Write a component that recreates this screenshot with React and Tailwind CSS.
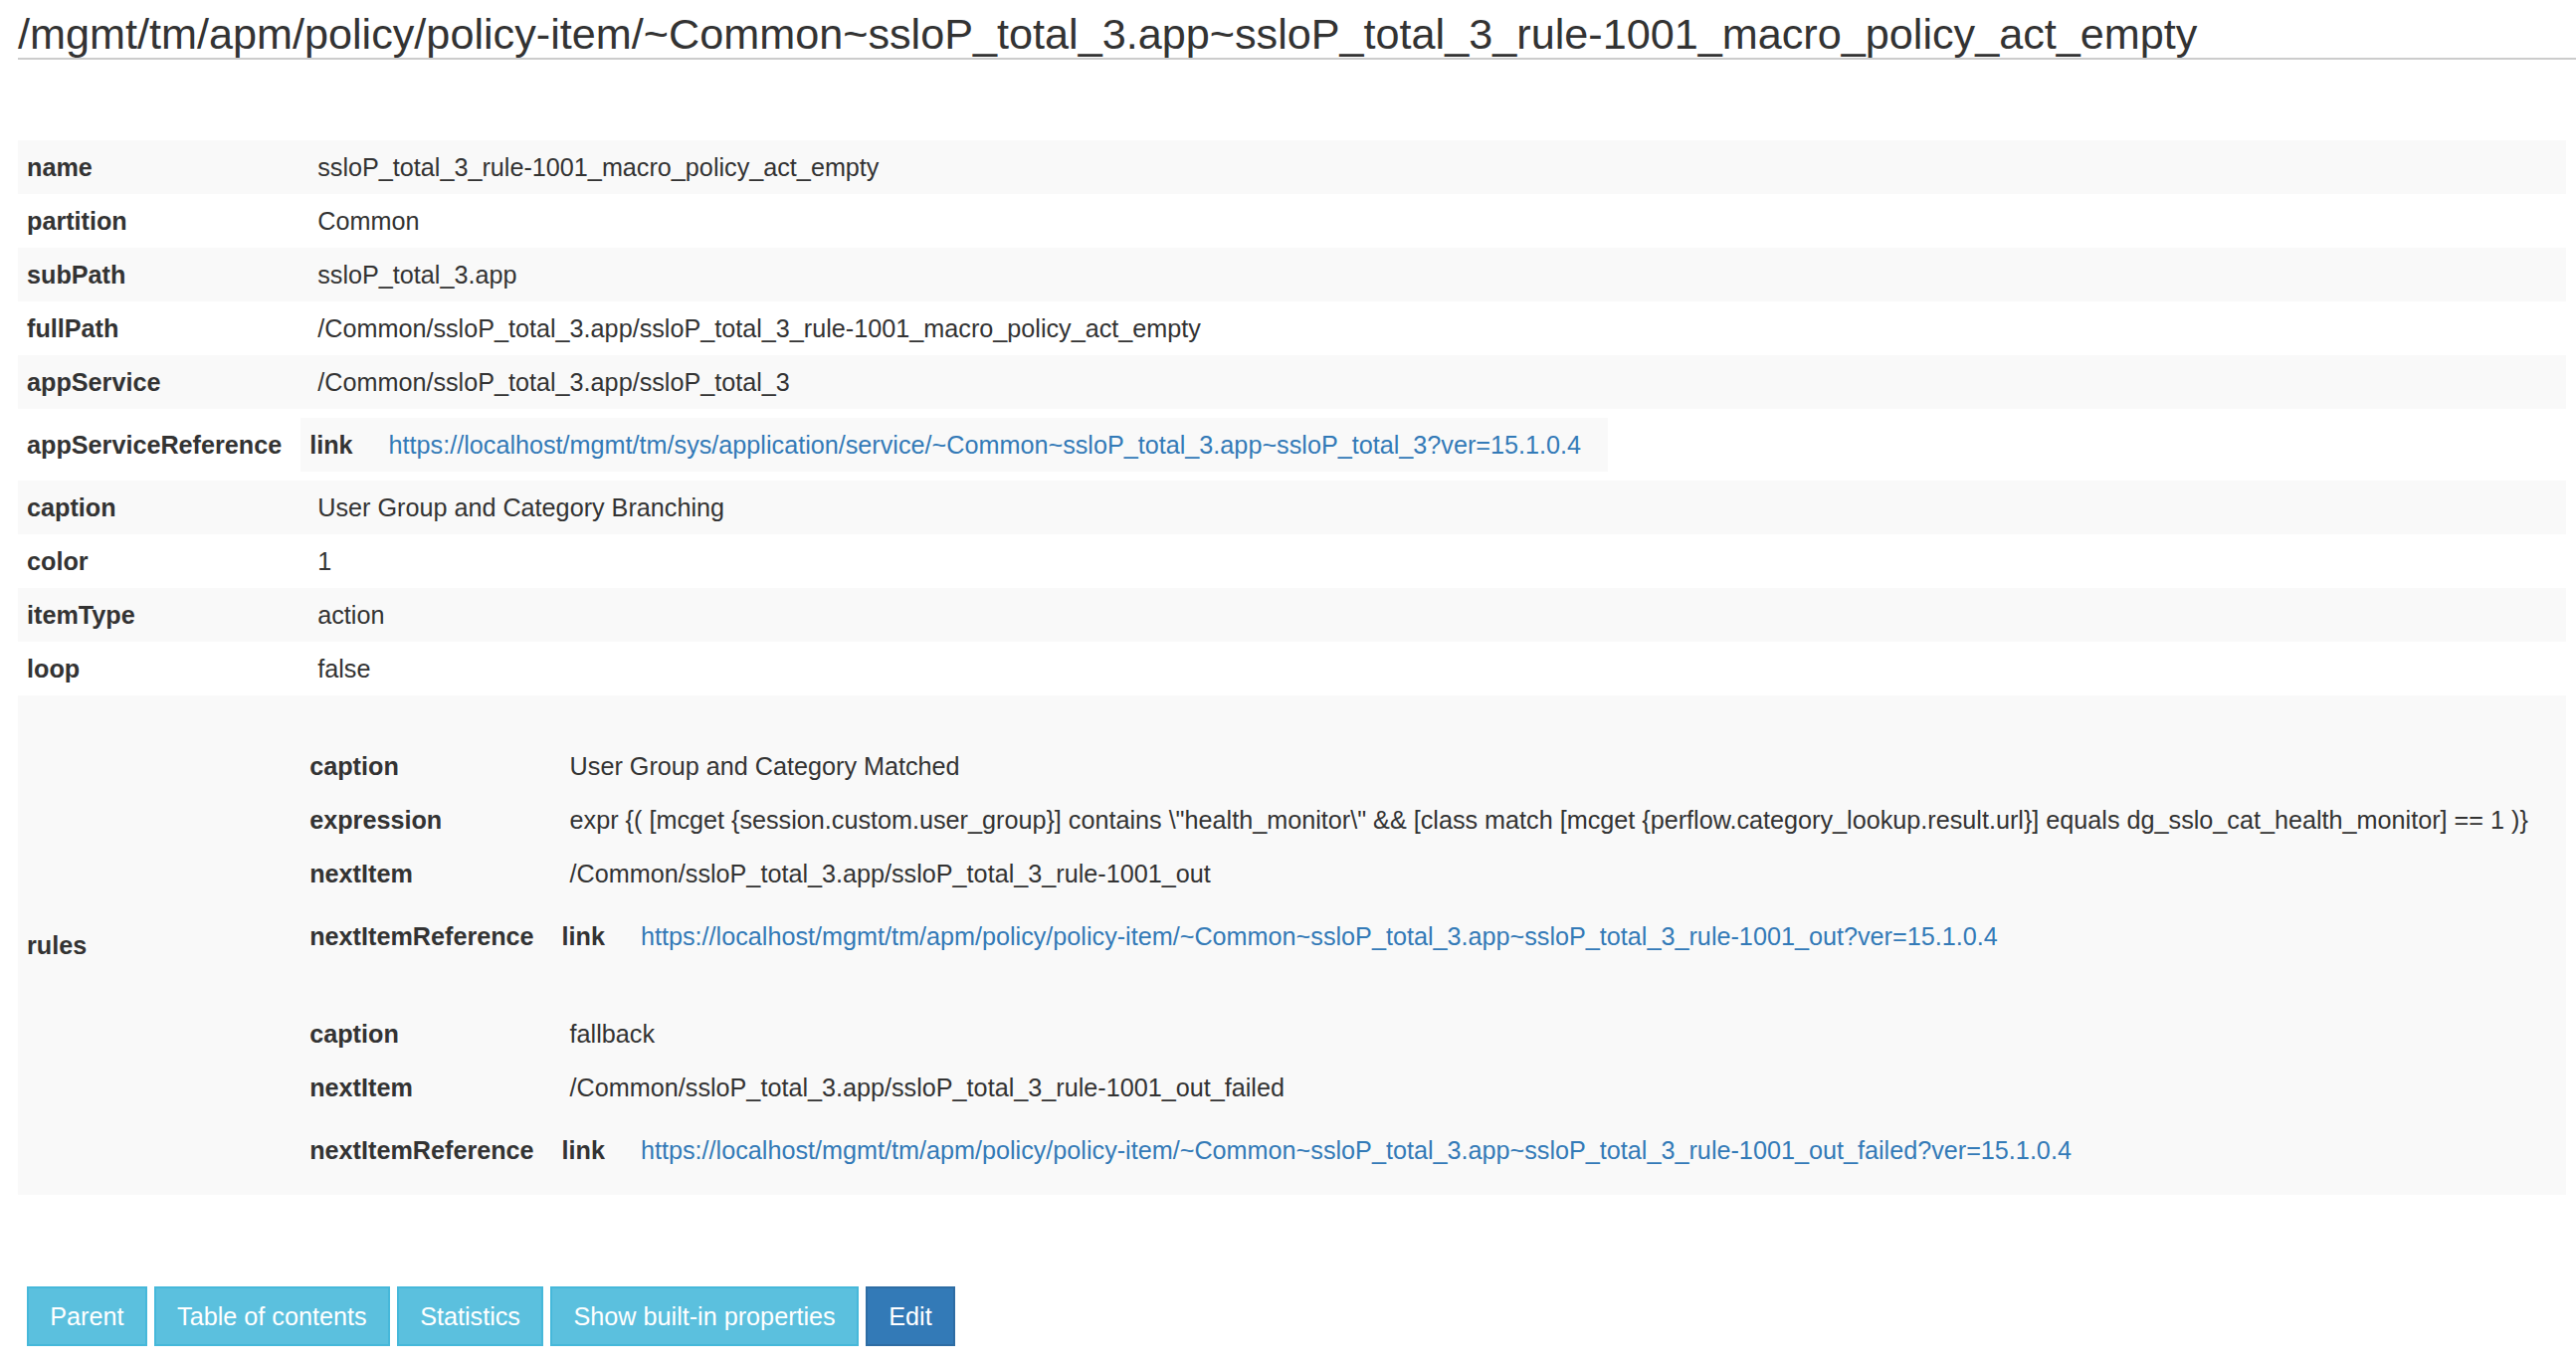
import React from 'react';

const FONT = { fontFamily: '"Liberation Sans", Arial, Helvetica, sans-serif' };

const link = (url) => ({ link: url });

const RULES = [
  [
    ['caption', 'User Group and Category Matched'],
    ['expression', 'expr {( [mcget {session.custom.user_group}] contains \\"health_monitor\\" && [class match [mcget {perflow.category_lookup.result.url}] equals dg_sslo_cat_health_monitor] == 1 )}'],
    ['nextItem', '/Common/ssloP_total_3.app/ssloP_total_3_rule-1001_out'],
    ['nextItemReference', link('https://localhost/mgmt/tm/apm/policy/policy-item/~Common~ssloP_total_3.app~ssloP_total_3_rule-1001_out?ver=15.1.0.4')]
  ],
  [
    ['caption', 'fallback'],
    ['nextItem', '/Common/ssloP_total_3.app/ssloP_total_3_rule-1001_out_failed'],
    ['nextItemReference', link('https://localhost/mgmt/tm/apm/policy/policy-item/~Common~ssloP_total_3.app~ssloP_total_3_rule-1001_out_failed?ver=15.1.0.4')]
  ]
];

const ROWS = [
  ['name', 'ssloP_total_3_rule-1001_macro_policy_act_empty'],
  ['partition', 'Common'],
  ['subPath', 'ssloP_total_3.app'],
  ['fullPath', '/Common/ssloP_total_3.app/ssloP_total_3_rule-1001_macro_policy_act_empty'],
  ['appService', '/Common/ssloP_total_3.app/ssloP_total_3'],
  ['appServiceReference', link('https://localhost/mgmt/tm/sys/application/service/~Common~ssloP_total_3.app~ssloP_total_3?ver=15.1.0.4')],
  ['caption', 'User Group and Category Branching'],
  ['color', '1'],
  ['itemType', 'action'],
  ['loop', 'false'],
  ['rules', RULES]
];

const BUTTONS = [
  { label: 'Parent', primary: false },
  { label: 'Table of contents', primary: false },
  { label: 'Statistics', primary: false },
  { label: 'Show built-in properties', primary: false },
  { label: 'Edit', primary: true }
];

function Value({ v }) {
  if (typeof v === 'string') {
    return <td className="pl-[29px] pr-[27px] py-[9px] whitespace-nowrap">{v}</td>;
  }
  if (v && v.url) {
    return (
      <td className="pl-[29px] pr-[27px] py-[9px] whitespace-nowrap">
        <a href="#" className="text-[#337ab7]">{v.url}</a>
      </td>
    );
  }
  if (Array.isArray(v)) {
    // list of objects: each one rendered as its own table
    return (
      <td className="pl-[12px] pr-[10px] py-[9px]">
        {v.map((rows, i) => (
          <div key={i} className="pt-[35px]">
            <PropTable rows={rows} />
          </div>
        ))}
      </td>
    );
  }
  return (
    <td className="pl-[12px] pr-[10px] py-[9px]">
      <PropTable rows={[['link', { url: v.link }]]} />
    </td>
  );
}

function PropTable({ rows, full }) {
  return (
    <table className={full ? 'w-full border-collapse' : 'border-collapse'}>
      <tbody>
        {rows.map(([k, v], i) => (
          <tr key={k + i} className={i % 2 === 0 ? 'bg-[#f9f9f9]' : ''}>
            <th className="w-px pl-[9px] pr-[7px] py-[9px] text-left font-bold whitespace-nowrap align-middle">{k}</th>
            <Value v={v} />
          </tr>
        ))}
      </tbody>
    </table>
  );
}

export default function App() {
  return (
    <div className="min-h-screen bg-white text-[#333333] text-[25.2px] leading-[36px] pl-[18px]" style={FONT}>
      <h3 className="mt-[10.5px] border-b-2 border-[#cccccc] text-[43.2px] leading-[47.5px] whitespace-nowrap">
        /mgmt/tm/apm/policy/policy-item/~Common~ssloP_total_3.app~ssloP_total_3_rule-1001_macro_policy_act_empty
      </h3>

      <div className="mt-[81px] mr-[10px]">
        <PropTable rows={ROWS} full />
      </div>

      <div className="mt-[92px] ml-[9px] flex gap-[7px] pb-[20px]">
        {BUTTONS.map(({ label, primary }) => (
          <button
            key={label}
            className={
              primary
                ? 'bg-[#337ab7] border-2 border-[#2e6da4] text-white px-[21.3px] py-[10px] leading-[36px]'
                : 'bg-[#5bc0de] border-2 border-[#46b8da] text-white px-[21.3px] py-[10px] leading-[36px]'
            }
          >
            {label}
          </button>
        ))}
      </div>
    </div>
  );
}
